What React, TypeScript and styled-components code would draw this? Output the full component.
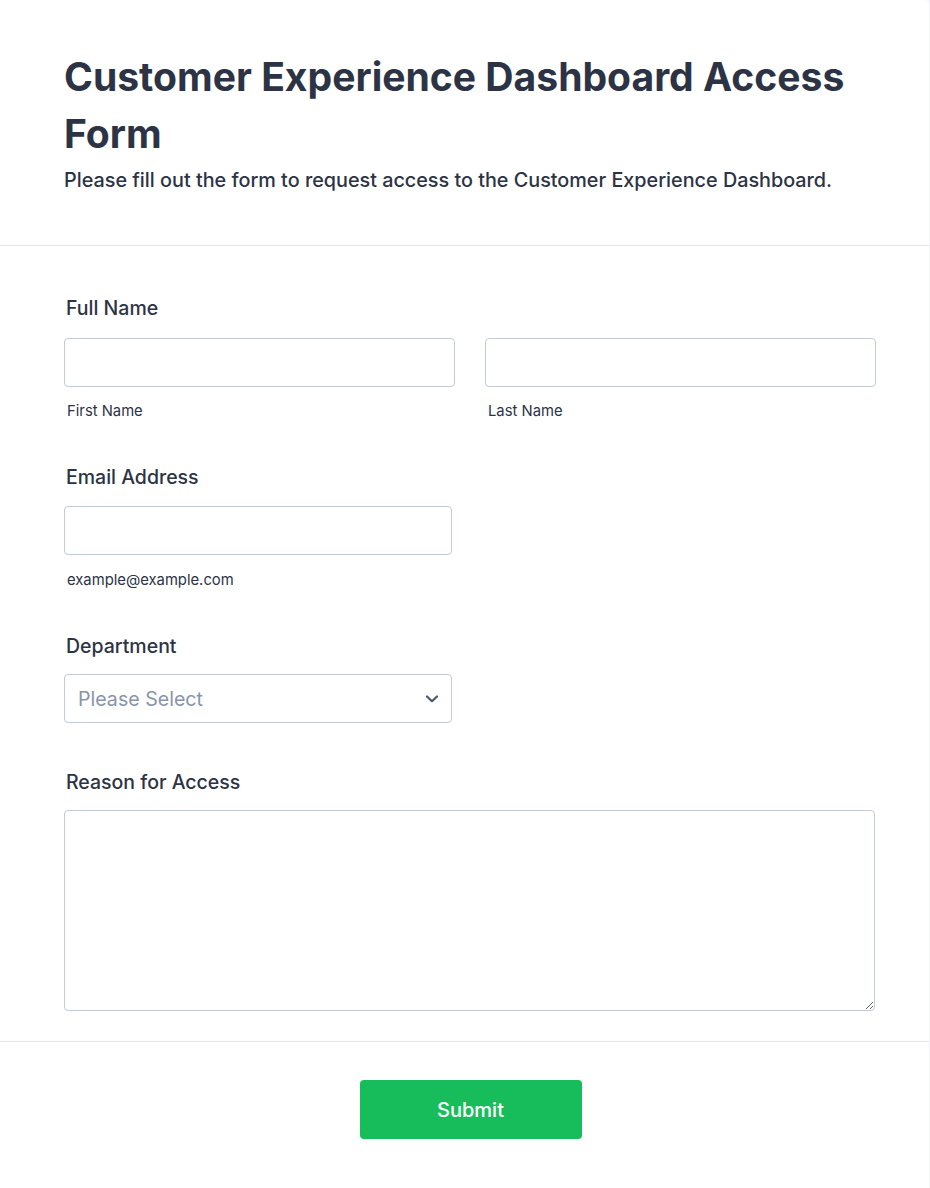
import React from "react";
import styled, { createGlobalStyle } from "styled-components";

const GlobalStyle = createGlobalStyle`
  * { box-sizing: border-box; }
  html, body { margin: 0; padding: 0; background: #f3f3fe; }
  body { font-family: Inter, "Noto Sans", sans-serif; color: #2c3345; }
`;

const Card = styled.div`
  width: 929px;
  min-height: 1188px;
  background: #ffffff;
  border-top-right-radius: 4px;
`;

const Header = styled.header`
  padding: 48px 64px 53px;
  border-bottom: 1px solid #e3e5ea;
`;

const Title = styled.h1`
  margin: 0;
  font-size: 39.1px;
  line-height: 57px;
  font-weight: 700;
  color: #2c3345;
`;

const Subtitle = styled.p`
  margin: 6px 0 0;
  font-size: 19.8px;
  line-height: 24px;
  font-weight: 500;
  color: #2c3345;
`;

const FormBody = styled.form`
  padding: 51px 54px 30px 64px;
  border-bottom: 1px solid #e3e5ea;
`;

const Field = styled.div<{ $gap: number }>`
  margin-bottom: ${(p) => p.$gap}px;
`;

const Label = styled.label<{ $space?: number }>`
  display: block;
  padding-left: 2px;
  font-size: 19.5px;
  line-height: 22px;
  font-weight: 500;
  color: #2c3345;
  margin-bottom: ${(p) => p.$space ?? 19}px;
`;

const Row = styled.div`
  display: grid;
  grid-template-columns: 391px 391px;
  column-gap: 30px;
`;

const Column = styled.div<{ $width?: number }>`
  display: flex;
  flex-direction: column;
  width: ${(p) => (p.$width ? `${p.$width}px` : "auto")};
`;

const TextInput = styled.input`
  width: 100%;
  height: 49px;
  border: 1px solid #c3cad8;
  border-radius: 4px;
  padding: 0 12px;
  font-family: inherit;
  font-size: 16px;
  color: #2c3345;
  background: #fff;
  outline: none;
`;

const SubLabel = styled.span`
  display: block;
  margin-top: 15px;
  padding-left: 3px;
  font-size: 14.8px;
  line-height: 18px;
  color: #2c3345;
`;

const SelectBox = styled.div`
  width: 388px;
  height: 49px;
  border: 1px solid #c3cad8;
  border-radius: 4px;
  display: flex;
  align-items: center;
  justify-content: space-between;
  padding: 0 12px 0 13px;
  background: #fff;
`;

const Placeholder = styled.span`
  font-size: 19.6px;
  color: #8894ab;
`;

const TextArea = styled.textarea`
  display: block;
  width: 811px;
  height: 201px;
  border: 1px solid #c3cad8;
  border-radius: 4px;
  padding: 10px 12px;
  font-family: inherit;
  font-size: 16px;
  outline: none;
  resize: vertical;
  background: #fff;
`;

const Footer = styled.div`
  display: flex;
  justify-content: center;
  padding: 38px 0 0 12px;
`;

const SubmitButton = styled.button`
  width: 222px;
  height: 59px;
  border: none;
  border-radius: 4px;
  background: #18bd5b;
  color: #fff;
  font-family: inherit;
  font-size: 20px;
  font-weight: 500;
  cursor: pointer;
`;

const Chevron = () => (
  <svg width="14" height="10" viewBox="0 0 14 10" aria-hidden="true">
    <path d="M2 2.5 L7 7.2 L12 2.5" fill="none" stroke="#4a5670" strokeWidth="2.2" strokeLinecap="round" strokeLinejoin="round" />
  </svg>
);

export default function App() {
  return (
    <>
      <GlobalStyle />
      <Card>
        <Header>
          <Title>Customer Experience Dashboard Access Form</Title>
          <Subtitle>Please fill out the form to request access to the Customer Experience Dashboard.</Subtitle>
        </Header>
        <FormBody onSubmit={(e) => e.preventDefault()}>
          <Field $gap={46}>
            <Label>Full Name</Label>
            <Row>
              <Column>
                <TextInput type="text" />
                <SubLabel>First Name</SubLabel>
              </Column>
              <Column>
                <TextInput type="text" />
                <SubLabel>Last Name</SubLabel>
              </Column>
            </Row>
          </Field>
          <Field $gap={46}>
            <Label $space={18}>Email Address</Label>
            <Column $width={388}>
              <TextInput type="email" />
              <SubLabel style={{ marginTop: 16 }}>example@example.com</SubLabel>
            </Column>
          </Field>
          <Field $gap={48}>
            <Label $space={17}>Department</Label>
            <SelectBox>
              <Placeholder>Please Select</Placeholder>
              <Chevron />
            </SelectBox>
          </Field>
          <Field $gap={0}>
            <Label $space={17}>Reason for Access</Label>
            <TextArea />
          </Field>
        </FormBody>
        <Footer>
          <SubmitButton type="button">Submit</SubmitButton>
        </Footer>
      </Card>
    </>
  );
}
